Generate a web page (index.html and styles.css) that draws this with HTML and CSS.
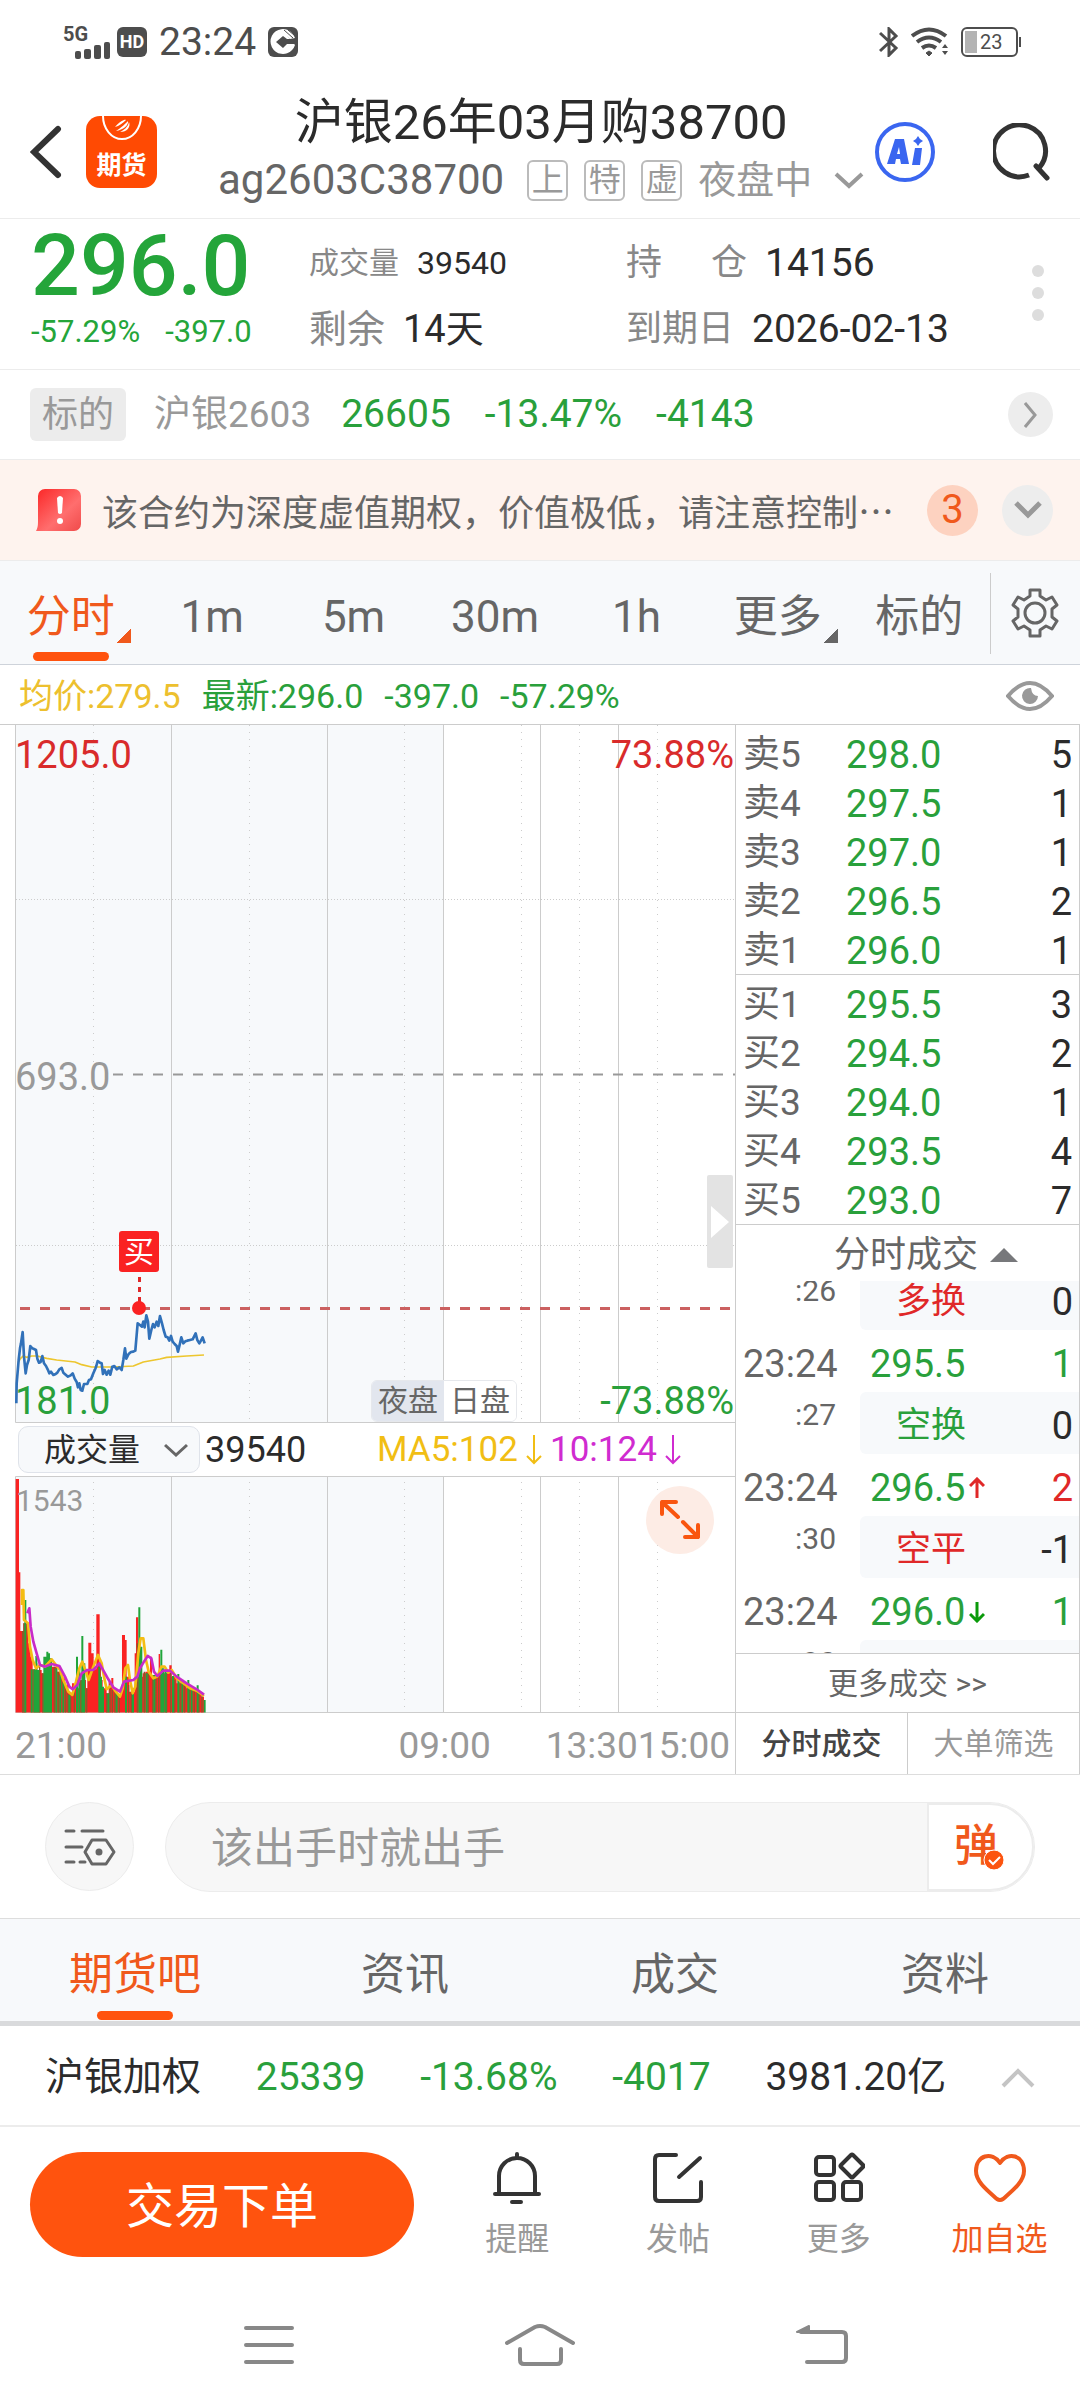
FILE: index.html
```html
<!DOCTYPE html>
<html lang="zh-CN">
<head>
<meta charset="utf-8">
<meta name="viewport" content="width=device-width, initial-scale=1">
<title>沪银26年03月购38700</title>
<link rel="stylesheet" href="styles.css">
</head>
<body>
<div class="status">
  <div class="status-side">
    <div class="signal"><b>5G</b>
      <svg width="36" height="17" viewBox="0 0 36 17" fill="#4d4d4d"><rect x="0" y="9" width="6" height="8" rx="2"/><rect x="9" y="7" width="7" height="10" rx="2"/><rect x="19" y="3" width="7" height="14" rx="2"/><rect x="29" y="0" width="6" height="17" rx="2"/></svg>
    </div>
    <span class="hd">HD</span>
    <time class="clock">23:24</time>
    <svg width="30" height="30" viewBox="0 0 30 30"><rect width="30" height="30" rx="6" fill="#4d4d4d"/><path d="M27 18A12.500 12.500 0 1 1 27 11L22 12 19 9z" fill="#fff"/><path d="M8 15l7-6 4 3h8v5h-8l-4 4z" fill="#4d4d4d"/><path d="M16 3l9 8M20 3l6 5" stroke="#4d4d4d"/></svg>
  </div>
  <div class="status-side">
    <svg width="20" height="30" viewBox="0 0 20 30" fill="none" stroke="#4d4d4d" stroke-width="3"><path d="M1 6l16 15-7 7V2l7 7L1 24"/></svg>
    <svg width="38" height="30" viewBox="0 0 38 30" fill="none" stroke="#4d4d4d" stroke-width="4"><path d="M1 9Q18-4 35 9M6 15q12-9 24 0M11 21q7-5 14 0"/><path d="M18 24l-3 2 3 3 3-3z" fill="#4d4d4d" stroke-width="1"/><path d="M31 21l3-4 3 4zM31 24l3 4 3-4z" fill="#4d4d4d" stroke="none"/></svg>
    <div class="battery"><i></i><span>23</span></div>
  </div>
</div>

<header class="head">
  <div class="head-left">
    <button class="plain" aria-label="返回"><svg width="32" height="54" viewBox="0 0 32 54" fill="none" stroke="#333" stroke-width="6" stroke-linecap="round"><path d="M28 4L4 27l24 23"/></svg></button>
    <a class="logo" href="#" aria-label="期货">
      <svg width="40" height="26" viewBox="0 0 40 26"><path d="M1 0a19 23 0 0 0 38 0" fill="none" stroke="#fff" stroke-width="2"/><path d="M13 11c5-6 10-8 11-7-3 3-7 6-11 7zm1 4c5-3 10-8 12-10 1 4-5 9-12 10zm4 1c4-2 8-5 9-10 2 5-2 10-9 10z" fill="#fff"/></svg>
      <b>期货</b>
    </a>
  </div>
  <div class="head-mid">
    <h1>沪银26年03月购38700</h1>
    <div class="sub"><span class="code">ag2603C38700</span><span class="badge">上</span><span class="badge">特</span><span class="badge">虚</span><button class="plain session">夜盘中<svg width="30" height="18" viewBox="0 0 30 18" fill="none" stroke="#999" stroke-width="4"><path d="M2 3l13 12L28 3"/></svg></button></div>
  </div>
  <div class="head-right">
    <button class="plain" aria-label="AI"><svg width="60" height="60" viewBox="0 0 60 60"><circle cx="30" cy="30" r="28" fill="none" stroke="#3a66f0" stroke-width="4"/><path d="M12 42l8-25h9l5 25h-8l-1-5h-4l-1 5zm10-10h3l-1-7zM40 26h7l-2 17h-8zM43 14l2 3 3 2-3 2-2 3-2-3-3-2 3-2z" fill="#3a66f0" fill-rule="evenodd"/></svg></button>
    <button class="plain" aria-label="搜索"><svg width="58" height="58" viewBox="0 0 58 58" fill="none" stroke="#333" stroke-width="5"><path d="M36 52A26 26 0 1 1 46 45"/><path d="M43 43l11 12" stroke-linecap="round"/></svg></button>
  </div>
</header>

<section class="quote">
  <div class="last"><strong>296.0</strong><p><span>-57.29%</span><span>-397.0</span></p></div>
  <dl class="facts facts-a">
    <div class="small"><dt>成交量</dt><dd>39540</dd></div>
    <div><dt>剩余</dt><dd>14天</dd></div>
  </dl>
  <dl class="facts facts-b">
    <div><dt class="spread"><span>持</span><span>仓</span></dt><dd>14156</dd></div>
    <div><dt>到期日</dt><dd>2026-02-13</dd></div>
  </dl>
  <button class="plain dots" aria-label="更多"><i></i><i></i><i></i></button>
</section>

<section class="under">
  <span class="tag">标的</span><span class="name">沪银2603</span><span>26605</span><span>-13.47%</span><span>-4143</span>
  <button class="round r-sm" aria-label="查看标的"><svg width="14" height="26" viewBox="0 0 14 26" fill="none" stroke="#999" stroke-width="3"><path d="M1 1l10 12L1 25"/></svg></button>
</section>

<section class="warn">
  <svg width="46" height="44" viewBox="0 0 46 44"><defs><linearGradient id="wg" x1="0" y1="0" x2="1" y2="1"><stop offset="0" stop-color="#fb2626"/><stop offset=".6" stop-color="#ff6e6e"/><stop offset="1" stop-color="#f04a4a"/></linearGradient></defs><path d="M2 8a7 7 0 0 1 7-7h29a7 7 0 0 1 7 7v28a7 7 0 0 1-7 7H0q2-3 2-9z" fill="url(#wg)"/><path d="M21 10q3-4 6 0l-1 15q-2 2-4 0z" fill="#fff"/><circle cx="24" cy="33" r="3" fill="#fff"/></svg>
  <p>该合约为深度虚值期权，价值极低，请注意控制…</p>
  <span class="round count">3</span>
  <button class="round" aria-label="展开"><svg width="28" height="18" viewBox="0 0 28 18" fill="none" stroke="#999" stroke-width="5"><path d="M2 2l12 12L26 2"/></svg></button>
</section>

<nav class="periods">
  <button class="tab on"><span>分时<i class="corner"></i></span></button>
  <button class="tab">1m</button>
  <button class="tab">5m</button>
  <button class="tab">30m</button>
  <button class="tab">1h</button>
  <button class="tab"><span>更多<i class="corner"></i></span></button>
  <button class="tab">标的</button>
  <button class="gear" aria-label="设置"><svg width="48" height="50" viewBox="0 0 48 50" fill="none" stroke="#666" stroke-width="3" stroke-linejoin="round"><path d="M19 2h10v6l6 4 6-3 5 8-5 4v8l5 4-5 8-6-3-6 4v6H19v-6l-6-4-6 3-5-8 5-4v-8l-5-4 5-8 6 3 6-4z"/><circle cx="24" cy="25" r="10"/></svg></button>
</nav>

<section class="legend">
  <span class="avg">均价:279.5</span><span>最新:296.0</span><span>-397.0</span><span>-57.29%</span>
  <button class="plain" aria-label="显示"><svg width="48" height="30" viewBox="0 0 48 30"><path d="M2 15Q24-11 46 15 24 41 2 15z" fill="none" stroke="#999" stroke-width="4"/><path d="M25 7a8 8 0 1 0 7 8q-6 0-7-8z" fill="#999"/></svg></button>
</section>

<main class="main">
  <div class="charts">
    <div class="plot">
      <svg class="chart" viewBox="0 725 735 698" role="img" aria-label="分时走势">
        <rect x="15" y="725" width="428" height="698" fill="#f7f9fb"/>
        <path class="grid" d="M15.500 725V1422.500H735M171.500 725V1422M327.500 725V1422M443.500 725V1422M540.500 725V1422M618.500 725V1422"/>
        <path class="grid dots-v" d="M93.500 725V1422M249.500 725V1422M404.500 725V1422M521.500 725V1422M579.500 725V1422M657.500 725V1422"/>
        <path class="grid dots-h" d="M16 899.500H735M16 1245.500H735"/>
        <path d="M113 1074.500H735" stroke="#999" stroke-width="2" stroke-dasharray="10 10"/>
        <path d="M20 1308.500H735" stroke="#cb6060" stroke-width="3" stroke-dasharray="10 10"/>
        <g transform="translate(0 1280) scale(.3333)" fill="none" stroke-linejoin="round">
          <path stroke="#edc62e" stroke-width="5" d="M54 248L62 235 70 228 80 232 95 228 112 228 140 235 170 240 225 246 245 254 275 261 340 261 400 258 430 246 480 237 500 232 560 228 612 225"/>
          <path stroke="#3171b9" stroke-width="8" d="M49 370L50 310 56 240 60 205 63 190 68 156 72 230 77 280 81 255 86 240 91 198 97 205 102 207 108 210 112 236 117 248 122 246 127 228 132 250 138 258 143 268 148 280 153 275 160 285 167 282 172 278 178 268 185 264 190 278 197 284 204 290 212 286 218 280 224 296 230 306 234 322 238 310 242 330 247 332 252 312 262 312 267 300 273 298 280 280 286 266 289 258 293 243 300 248 305 250 309 282 314 270 320 284 326 272 331 284 337 260 343 258 350 268 358 262 365 270 370 240 375 205 379 236 386 222 393 216 400 215 406 212 410 165 413 130 420 135 426 140 430 125 434 142 439 106 444 125 448 176 454 150 459 132 464 142 470 125 475 138 480 108 486 130 491 150 497 170 503 172 508 182 513 168 518 185 524 192 530 198 534 215 540 190 544 172 550 190 556 184 562 182 570 180 578 178 587 160 592 180 598 190 603 182 608 172 614 190"/>
        </g>
        <path d="M139.500 1277V1302" stroke="#e02828" stroke-width="3" stroke-dasharray="5 5"/>
        <circle cx="139" cy="1308" r="7" fill="#fa2222"/>
        <rect x="119" y="1231" width="40" height="41" rx="3" fill="#fa2222"/>
        <text class="t-mid" x="139" y="1262" font-size="30" fill="#fff">买</text>
        <text x="15" y="768" fill="#d92b2b">1205.0</text>
        <text class="t-end" x="734" y="768" fill="#d92b2b">73.88%</text>
        <text x="15" y="1090" fill="#999">693.0</text>
        <text x="15" y="1414" fill="#29a03b">181.0</text>
        <text class="t-end" x="734" y="1414" fill="#29a03b">-73.88%</text>
      </svg>
      <div class="sessions"><button class="night">夜盘</button><button>日盘</button></div>
      <button class="handle" aria-label="收起"><svg width="18" height="32" viewBox="0 0 18 32"><path d="M0 0l18 16L0 32z" fill="#fff"/></svg></button>
    </div>
    <div class="vol-head">
      <button class="pick">成交量<svg width="24" height="14" viewBox="0 0 24 14" fill="none" stroke="#666" stroke-width="3"><path d="M1 2l11 10L23 2"/></svg></button>
      <span class="vol">39540</span>
      <span class="ma5">MA5:102<svg width="16" height="32" viewBox="0 0 16 32" fill="none" stroke="currentColor" stroke-width="2"><path d="M8 1v28M1 22l7 7 7-7"/></svg></span>
      <span class="ma10">10:124<svg width="16" height="32" viewBox="0 0 16 32" fill="none" stroke="currentColor" stroke-width="2"><path d="M8 1v28M1 22l7 7 7-7"/></svg></span>
    </div>
    <div class="plot">
      <svg class="chart" viewBox="0 1476 735 237" role="img" aria-label="成交量">
        <rect x="15" y="1476" width="428" height="237" fill="#f7f9fb"/>
        <path class="grid" d="M735 1476.500H15.500V1712.500H735M171.500 1476V1712M327.500 1476V1712M443.500 1476V1712M540.500 1476V1712M618.500 1476V1712"/>
        <path class="grid dots-v" d="M93.500 1482V1712M249.500 1482V1712M404.500 1482V1712M521.500 1482V1712M579.500 1482V1712M657.500 1482V1712"/>
        <g transform="translate(0 1280) scale(.3333)" fill="none">
          <path fill="#fa2222" d="M47 1298V597H57V877H61V1053H70V1030H85V1090H92V1130H98V1168H108V1150H112V1170H125V1180H150V1160H172V1175H185V1195H195V1215H205V1240H216V1210H222V1225H240V1200H258V1225H262V1170H265V1088H274V1120H281V1168H289V1003H299V1150H303V1200H308V1225H320V1240H326V1205H334V1194H340V1230H352V1245H366V1065H375V1080H380V1190H388V1235H404V1120H408V1012H415V1190H428V1180H436V1175H450V1130H456V1185H476V1122H480V1180H508V1156H515V1190H530V1210H560V1225H590V1235H604V1250H612V1298Z"/>
          <path stroke="#8b5a2b" stroke-width="4" d="M68 1298V1053M72 1298V1030M119 1298V1160M128 1298V1180M163 1298V1160M175 1298V1175M197 1298V1225M204 1298V1240M212 1298V1250M223 1298V1215M243 1298V1200M260 1298V1225M320 1298V1240M330 1298V1215M337 1298V1230M345 1298V1235M358 1298V1248M386 1298V1215M394 1298V1235M412 1298V1090M433 1298V1175M445 1298V1180M458 1298V1185M468 1298V1190M476 1298V1185M500 1298V1180M512 1298V1180M524 1298V1200M540 1298V1205M554 1298V1212M568 1298V1220M583 1298V1228M597 1298V1235M606 1298V1245"/>
          <path stroke="#20a53a" stroke-width="6" d="M76 1298V960M95 1298V1168M103 1298V1168M109 1298V1128M115 1298V1170M133 1298V1130M138 1298V1130M142 1298V1115M147 1298V1120M153 1298V1135M138 1298V1130M169 1298V1165M181 1298V1185M190 1298V1205M208 1298V1245M231 1298V1130M238 1298V1165M247 1298V1068M253 1298V1150M298 1298V1160M303 1298V1190M309 1298V1220M325 1298V1240M350 1298V1240M378 1298V1190M399 1298V1225M418 1298V982M424 1298V1100M440 1298V1180M463 1298V1185M484 1298V1109M490 1298V1165M497 1298V1170M519 1298V1188M535 1298V1182M547 1298V1205M565 1298V1200M575 1298V1225M593 1298V1216M614 1298V1260"/>
          <path stroke="#f4bd13" stroke-width="8" stroke-linejoin="round" d="M66 975L66 930 70 930 72 1020 84 1030 90 1100 98 1140 108 1165 120 1155 135 1160 155 1138 168 1155 180 1170 190 1200 205 1235 217 1245 228 1205 238 1165 247 1145 256 1170 266 1200 280 1160 294 1125 305 1150 312 1190 320 1228 335 1215 345 1232 360 1250 368 1225 376 1165 384 1155 390 1200 398 1240 406 1220 415 1120 422 1075 430 1075 438 1140 446 1175 460 1195 472 1190 484 1160 494 1160 505 1178 515 1170 530 1195 550 1210 570 1225 590 1232 612 1248"/>
          <path stroke="#c82bc8" stroke-width="8" stroke-linejoin="round" d="M82 1000L88 985 92 1040 100 1085 110 1120 120 1155 135 1160 155 1152 178 1158 195 1190 208 1220 218 1228 232 1215 245 1180 262 1170 280 1170 298 1150 312 1175 325 1198 340 1222 360 1235 372 1205 400 1200 412 1190 420 1165 432 1145 443 1128 454 1135 462 1175 472 1188 490 1172 510 1172 530 1190 560 1210 590 1228 612 1244"/>
        </g>
        <text x="16" y="1511" font-size="30" fill="#999">1543</text>
      </svg>
      <button class="expand" aria-label="放大"><svg width="42" height="42" viewBox="0 0 42 42" fill="none" stroke="#f9550f" stroke-width="4" stroke-linecap="round" stroke-linejoin="round"><path d="M19 18L3 3M3 15V3h14M24 23l15 15M39 26v12H26"/></svg></button>
    </div>
    <div class="times"><span>21:00</span><span class="t9">09:00</span><span class="t13">13:30</span><span>15:00</span></div>
  </div>

  <aside class="side">
    <table class="book">
      <tbody>
        <tr><th>卖5</th><td>298.0</td><td>5</td></tr>
        <tr><th>卖4</th><td>297.5</td><td>1</td></tr>
        <tr><th>卖3</th><td>297.0</td><td>1</td></tr>
        <tr><th>卖2</th><td>296.5</td><td>2</td></tr>
        <tr><th>卖1</th><td>296.0</td><td>1</td></tr>
      </tbody>
    </table>
    <table class="book">
      <tbody>
        <tr><th>买1</th><td>295.5</td><td>3</td></tr>
        <tr><th>买2</th><td>294.5</td><td>2</td></tr>
        <tr><th>买3</th><td>294.0</td><td>1</td></tr>
        <tr><th>买4</th><td>293.5</td><td>4</td></tr>
        <tr><th>买5</th><td>293.0</td><td>7</td></tr>
      </tbody>
    </table>
    <button class="side-title">分时成交<svg width="28" height="14" viewBox="0 0 28 14"><path d="M0 14L14 0l14 14z" fill="#77787b"/></svg></button>
    <div class="ticks">
      <ul>
        <li class="det"><small>:26</small><div><b class="red">多换</b><em>0</em></div></li>
        <li class="deal"><time>23:24</time><b>295.5</b><em class="green">1</em></li>
        <li class="det"><small>:27</small><div><b>空换</b><em>0</em></div></li>
        <li class="deal"><time>23:24</time><b>296.5<svg width="16" height="22" viewBox="0 0 16 22" fill="none" stroke="#e02828" stroke-width="3"><path d="M8 21V2M1 9l7-7 7 7"/></svg></b><em class="red">2</em></li>
        <li class="det"><small>:30</small><div><b class="red">空平</b><em>-1</em></div></li>
        <li class="deal"><time>23:24</time><b>296.0<svg width="16" height="22" viewBox="0 0 16 22" fill="none" stroke="#0a9a0a" stroke-width="3"><path d="M8 1v19M1 13l7 7 7-7"/></svg></b><em class="green">1</em></li>
        <li class="det"><small>:30</small><div></div></li>
      </ul>
    </div>
    <a class="more" href="#">更多成交 &gt;&gt;</a>
    <div class="side-tabs"><button class="on">分时成交</button><button>大单筛选</button></div>
  </aside>
</main>

<form class="reply">
  <button type="button" class="filter" aria-label="弹幕设置"><svg width="52" height="38" viewBox="0 0 52 38" fill="none" stroke="#666" stroke-width="3" stroke-linecap="round" stroke-linejoin="round"><path d="M2 3h8M18 3h21M2 19h16M2 34h8M16 34h5M28 12h14l8 12-8 12H28l-7-12z"/><circle cx="35" cy="24" r="2" fill="#666"/></svg></button>
  <div class="field">
    <input type="text" placeholder="该出手时就出手" aria-label="评论">
    <button type="button" class="barrage"><span>弹</span><svg width="22" height="22" viewBox="0 0 22 22"><circle cx="11" cy="11" r="10" fill="#fc540f" stroke="#fff"/><path d="M6 11l4 4 7-7" fill="none" stroke="#fff" stroke-width="2"/></svg></button>
  </div>
</form>

<nav class="cats">
  <button class="tab on"><span>期货吧</span></button><button class="tab">资讯</button><button class="tab">成交</button><button class="tab">资料</button>
</nav>

<section class="index">
  <span class="iname">沪银加权</span><span class="green">25339</span><span class="green">-13.68%</span><span class="green">-4017</span><span>3981.20亿</span>
  <button class="plain" aria-label="展开"><svg width="34" height="20" viewBox="0 0 34 20" fill="none" stroke="#c4c4c4" stroke-width="4"><path d="M2 18L17 3l15 15"/></svg></button>
</section>

<footer class="actions">
  <button class="order">交易下单</button>
  <div class="acts">
    <button class="act"><svg width="50" height="52" viewBox="0 0 50 52" fill="none" stroke="#333" stroke-width="4" stroke-linecap="round"><path d="M25 2v4M7 42V24a18 18 0 0 1 36 0v18M3 42h44M20 50h9"/></svg>提醒</button>
    <button class="act"><svg width="50" height="52" viewBox="0 0 50 52" fill="none" stroke="#333" stroke-width="4" stroke-linecap="round"><path d="M23 3H6q-4 0-4 4v38q0 4 4 4h38q4 0 4-4V30M26 25L47 6"/></svg>发帖</button>
    <button class="act"><svg width="52" height="52" viewBox="0 0 52 52" fill="none" stroke="#333" stroke-width="4" stroke-linejoin="round"><rect x="3" y="5" width="18" height="18" rx="3"/><rect x="3" y="30" width="18" height="18" rx="3"/><rect x="30" y="30" width="18" height="18" rx="3"/><path d="M38 3q1-1 2 0l10 10q1 1 0 2L40 25q-1 1-2 0L28 15q-1-1 0-2z"/></svg>更多</button>
    <button class="act fav"><svg width="52" height="52" viewBox="0 0 52 52" fill="none" stroke="#f0591c" stroke-width="4" stroke-linejoin="round"><path d="M26 11C18-1 2 3 2 19c0 11 12 20 21 28q3 2 6 0c9-8 21-17 21-28C50 3 34-1 26 11z"/></svg>加自选</button>
  </div>
</footer>

<nav class="sysnav">
  <button aria-label="菜单"><svg width="72" height="44" viewBox="0 0 72 44" fill="none" stroke="#888" stroke-width="4" stroke-linecap="round"><path d="M13 5h46M13 22h46M13 39h46"/></svg></button>
  <button aria-label="主页"><svg width="72" height="44" viewBox="0 0 72 44" fill="none" stroke="#888" stroke-width="4" stroke-linecap="round" stroke-linejoin="round"><path d="M3 20L31 4q5-2 10 0l28 16M16 26v11q0 4 4 4h33q4 0 4-4V26"/></svg></button>
  <button aria-label="返回上级"><svg width="96" height="44" viewBox="-24 0 96 44" fill="none" stroke="#888" stroke-width="4" stroke-linecap="round" stroke-linejoin="round"><path d="M14 9h41q4 0 4 4v22q0 4-4 4H20"/><path d="M10 9L22 3v6z" fill="#888" stroke-width="2"/></svg></button>
</nav>
</body>
</html>
```
FILE: styles.css
```css
* { box-sizing: border-box; margin: 0; padding: 0; }
body {
  background: #fff;
  color: #2b2b2b;
  font-family: Roboto, "Noto Sans CJK SC", sans-serif;
  font-size: 38px;
  line-height: 1;
}
button, input { font: inherit; color: inherit; background: none; border: 0; }
button { cursor: pointer; }
svg { display: block; flex: none; }
a { color: inherit; text-decoration: none; }
ul { list-style: none; }
em, i { font-style: normal; }
.plain { display: flex; align-items: center; }
.green { color: #29a03b; }
.red { color: #e02828; }

/* status bar */
.status { display: flex; justify-content: space-between; height: 84px; padding: 0 62px 0 63px; }
.status-side { display: flex; align-items: center; gap: 12px; color: #4d4d4d; }
.signal { display: flex; flex-direction: column; align-items: flex-end; width: 48px; margin-right: -6px; }
.signal b { align-self: flex-start; font-size: 20px; line-height: 16px; }
.hd { width: 30px; height: 30px; border-radius: 6px; background: #4d4d4d; color: #fff; font-size: 18px; font-weight: 700; line-height: 30px; text-align: center; }
.clock { font-size: 39px; }
.battery { position: relative; display: flex; align-items: center; width: 57px; height: 30px; border: 2px solid #4d4d4d; border-radius: 6px; font-size: 20px; }
.battery i { width: 12px; height: 22px; margin: 0 3px 0 2px; background: #b3b3b3; }
.battery::after { content: ""; position: absolute; right: -5px; top: 8px; width: 2px; height: 10px; background: #4d4d4d; }

/* contract header */
.head { display: grid; grid-template-columns: 218px 1fr 218px; height: 135px; border-bottom: 1px solid #ececec; }
.head-left { display: flex; align-items: center; gap: 24px; padding: 2px 0 0 30px; }
.logo { display: flex; flex-direction: column; align-items: center; justify-content: space-between; width: 71px; height: 72px; padding-bottom: 10px; border-radius: 14px; background: #ff4a03; color: #fff; font-size: 25px; }
.head-mid { display: flex; flex-direction: column; align-items: center; gap: 5px; padding-top: 13px; white-space: nowrap; }
h1 { font-size: 49px; font-weight: 400; line-height: 52px; }
.sub { display: flex; align-items: center; height: 52px; color: #999; }
.code { margin-right: 23px; color: #666; font-size: 42px; }
.badge { width: 41px; height: 41px; margin-right: 16px; border: 2px solid #bbb; border-radius: 6px; font-size: 32px; line-height: 36px; text-align: center; }
.session { gap: 22px; font-size: 38px; }
.head-right { display: flex; align-items: center; gap: 58px; padding: 2px 0 0 11px; }

/* quote */
.quote { display: flex; height: 151px; border-bottom: 1px solid #ececec; white-space: nowrap; }
.last { width: 309px; padding: 10px 0 0 31px; color: #24a53a; }
.last strong { display: block; font-size: 86px; font-weight: 500; line-height: 74px; }
.last p { display: flex; gap: 25px; margin-top: 13px; font-size: 31px; }
.facts { display: flex; flex-direction: column; gap: 6px; padding-top: 14px; }
.facts div { display: flex; align-items: center; gap: 18px; height: 60px; }
.facts .small { font-size: 32px; }
.small dt { font-size: 30px; }
.facts dt { color: #888; }
.facts-a { width: 317px; font-size: 38px; }
.facts-b { flex: 1; font-size: 39px; }
.facts-b dt { font-size: 36px; }
.facts .spread { display: flex; justify-content: space-between; width: 121px; }
.dots { flex-direction: column; gap: 10px; padding: 46px 36px 0 0; }
.dots i { width: 12px; height: 12px; border-radius: 50%; background: #ddd; }

/* underlying */
.under { display: flex; align-items: center; gap: 34px; height: 90px; padding: 0 27px 0 30px; border-bottom: 1px solid #ececec; color: #29a03b; font-size: 39px; }
.tag { height: 53px; margin-right: -6px; padding: 0 12px; border-radius: 6px; background: #ececec; color: #999; font-size: 36px; line-height: 54px; }
.under .name { margin-right: -4px; color: #999; font-size: 37px; }
.round { display: flex; flex: none; align-items: center; justify-content: center; width: 51px; height: 51px; border-radius: 50%; background: #ededed; }
.r-sm { width: 45px; height: 45px; margin-left: auto; }

/* warning */
.warn { display: flex; align-items: center; height: 101px; padding: 0 27px 0 36px; border-bottom: 1px solid #ececec; background: #fef3ee; color: #666; }
.warn p { flex: 1; margin-left: 20px; overflow: hidden; font-family: "Noto Sans CJK SC", sans-serif; font-size: 36px; line-height: 54px; white-space: nowrap; }
.count { margin-right: 24px; background: #fdd2c0; color: #f0591c; font-size: 40px; }

/* period tabs */
.periods, .cats { display: flex; background: #f7f9fb; }
.periods { height: 104px; border-bottom: 1px solid #ced3da; }
.tab { position: relative; flex: 1 1 0; color: #666; font-size: 44px; }
.periods .tab { padding-top: 8px; }
.tab.on { color: #f0591c; }
.tab.on::after { content: ""; position: absolute; left: 50%; bottom: 3px; width: 76px; height: 9px; margin-left: -38px; border-radius: 5px; background: #ff530e; }
.tab span { position: relative; }
.corner { position: absolute; right: -16px; bottom: 0; width: 15px; height: 15px; background: linear-gradient(135deg, transparent 50%, currentColor 50%); }
.gear { display: flex; align-items: center; justify-content: center; width: 90px; background: linear-gradient(#ccc, #ccc) 0 12px / 1px 81px no-repeat; }

.legend { display: flex; align-items: center; gap: 21px; height: 60px; padding: 2px 26px 0 19px; color: #29a03b; font-size: 34px; border-bottom: 1px solid #ccc; }
.legend .avg { color: #edc02e; }
.legend button { margin-left: auto; }

/* chart and depth */
.main { display: flex; border-bottom: 1px solid #ddd; }
.charts { flex: 1; min-width: 0; }
.plot { position: relative; }
.chart { width: 100%; height: auto; font-size: 38px; }
.grid { fill: none; stroke: #ccc; }
.dots-v { stroke-dasharray: 1 6; }
.dots-h { stroke-dasharray: 1 2; }
.t-mid { text-anchor: middle; }
.t-end { text-anchor: end; }
.sessions { position: absolute; left: 371px; bottom: 1px; display: flex; border: 1px solid #e6e8ec; border-radius: 6px; color: #666; overflow: hidden; }
.sessions button { width: 72px; height: 40px; background: #fff; font-size: 30px; line-height: 38px; }
.sessions .night { background: #e2e6ee; }
.handle { position: absolute; right: 2px; bottom: 155px; display: flex; align-items: center; justify-content: center; width: 26px; height: 93px; border-radius: 2px; background: #e3e3e3; }
.vol-head { display: flex; align-items: center; height: 53px; padding-left: 18px; font-size: 35px; white-space: nowrap; }
.pick { display: flex; align-items: center; justify-content: space-between; width: 182px; height: 47px; padding: 0 11px 0 25px; border: 1px solid #dfe3ea; border-radius: 10px; background: #f7f9fb; font-size: 32px; }
.vol { width: 173px; padding-left: 5px; font-size: 36px; }
.ma5, .ma10 { display: flex; align-items: center; gap: 8px; }
.ma5 { width: 177px; padding-left: 4px; color: #f1be14; }
.ma10 { color: #d02bd0; }
.expand { position: absolute; right: 21px; top: 10px; display: flex; align-items: center; justify-content: center; width: 68px; height: 68px; border-radius: 50%; background: #fdece5; }
.times { display: flex; align-items: center; height: 61px; padding: 4px 5px 0 15px; color: #999; font-size: 37px; }
.t9 { margin-left: auto; }
.t13 { margin-left: 55px; }

.side { display: flex; flex-direction: column; width: 345px; border: solid #ccc; border-width: 0 1px; }
.book { display: block; height: 250px; padding-top: 5px; border-bottom: 1px solid #ccc; }
.book tbody { display: block; }
.book tr { display: grid; grid-template-columns: 103px 1fr auto; align-items: center; height: 49px; padding: 0 7px; }
.book th { color: #666; font-size: 37px; font-weight: 400; text-align: left; }
.book td { color: #29a03b; }
.book td:last-child { color: #2b2b2b; }
.side-title { display: flex; align-items: center; justify-content: center; gap: 12px; height: 56px; padding: 4px 0 0 37px; color: #666; font-size: 36px; }
.ticks { height: 373px; overflow: hidden; border-bottom: 1px solid #ccc; }
.ticks ul { margin-top: -13px; }
.ticks li { display: flex; height: 62px; padding-left: 7px; }
.ticks b { color: #29a03b; font-weight: 400; }
.ticks b.red { color: #e02828; }
.ticks em { margin-left: auto; padding-right: 6px; }
.deal { align-items: center; padding-top: 5px; }
.deal time { width: 127px; color: #666; }
.deal b { display: flex; align-items: center; gap: 4px; }
.det small { width: 93px; padding-top: 8px; color: #666; font-size: 30px; text-align: right; }
.det div { display: flex; flex: 1; align-items: center; margin-left: 24px; padding: 5px 0 0 36px; border-radius: 6px 0 0 6px; background: #f7f9fb; }
.det b { font-size: 35px; }
.more { display: flex; align-items: center; justify-content: center; height: 59px; padding-top: 2px; border-bottom: 1px solid #ccc; color: #666; font-size: 30px; }
.side-tabs { display: flex; flex: 1; }
.side-tabs button { flex: 1; color: #999; font-size: 30px; }
.side-tabs .on { border-right: 1px solid #ccc; color: #444; font-weight: 500; }

/* comment box */
.reply { display: flex; align-items: center; gap: 31px; height: 143px; padding: 0 45px; }
.filter { display: flex; flex: none; align-items: center; justify-content: center; width: 89px; height: 89px; border: 1px solid #ececec; border-radius: 50%; background: #f7f7f7; }
.field { display: flex; flex: 1; height: 90px; border: 1px solid #ececec; border-radius: 45px; background: #f7f7f7; overflow: hidden; }
.field input { flex: 1; min-width: 0; padding: 4px 0 0 45px; font-size: 42px; outline: 0; }
.field input::placeholder { color: #999; opacity: 1; }
.barrage { display: flex; align-items: flex-end; width: 107px; padding: 0 0 18px 25px; border: 2px solid #ececec; border-radius: 0 45px 45px 0; background: #fff; color: #f0591c; font-size: 44px; font-weight: 500; line-height: 50px; }
.barrage svg { margin-left: -15px; }

.cats { height: 108px; border-top: 1px solid #ddd; border-bottom: 5px solid #d9dadc; }
.cats .tab { padding-top: 9px; }
.cats .tab.on::after { bottom: 1px; }

.index { display: flex; align-items: center; justify-content: space-between; height: 101px; padding: 4px 45px 0; border-bottom: 2px solid #ececec; font-size: 39px; }

/* bottom actions */
.actions { display: flex; height: 155px; padding: 25px 0 0 30px; }
.order { width: 384px; height: 105px; padding-top: 4px; border-radius: 53px; background: #ff530e; color: #fff; font-size: 48px; }
.acts { display: flex; flex: 1; margin-left: 23px; }
.act { display: flex; flex: 1 1 0; flex-direction: column; align-items: center; gap: 17px; height: 104px; color: #999; font-size: 32px; line-height: 36px; }
.fav { color: #f0591c; }

.sysnav { display: grid; grid-template-columns: repeat(3, 1fr); justify-items: center; align-items: start; height: 126px; padding: 41px 134px 0; }
```
